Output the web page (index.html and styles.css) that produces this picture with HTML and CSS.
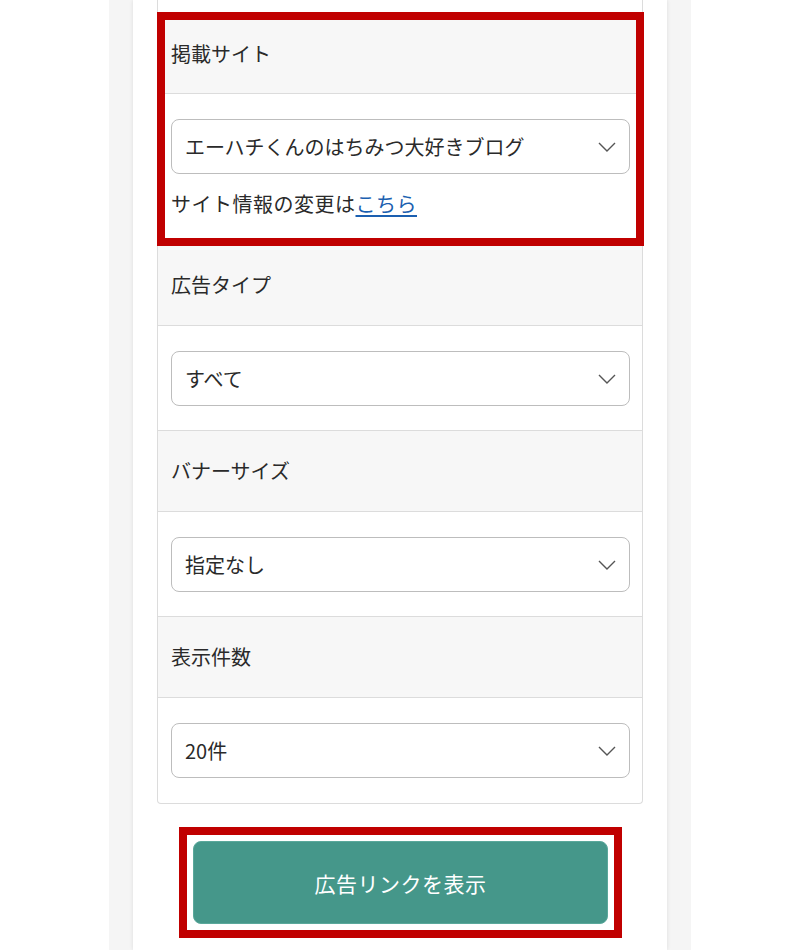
FILE: index.html
```html
<!DOCTYPE html>
<html lang="ja">
<head>
<meta charset="utf-8">
<title>広告リンク</title>
<link rel="stylesheet" href="styles.css">
</head>
<body>
<div class="page">
  <div class="panel">
    <div class="card">
      <div class="spacer"></div>
      <div class="group highlight">
        <div class="head first">掲載サイト</div>
        <div class="body">
          <div class="select-wrap">
            <select class="select"><option>エーハチくんのはちみつ大好きブログ</option></select>
            <svg class="chev" width="18" height="10" viewBox="0 0 18 10"><path d="M1 1 L9 9 L17 1" fill="none" stroke="#555" stroke-width="1.4"/></svg>
          </div>
          <p class="note">サイト情報の変更は<a href="#">こちら</a></p>
        </div>
      </div>
      <div class="head">広告タイプ</div>
      <div class="body">
        <div class="select-wrap">
          <select class="select"><option>すべて</option></select>
          <svg class="chev" width="18" height="10" viewBox="0 0 18 10"><path d="M1 1 L9 9 L17 1" fill="none" stroke="#555" stroke-width="1.4"/></svg>
        </div>
      </div>
      <div class="head">バナーサイズ</div>
      <div class="body">
        <div class="select-wrap">
          <select class="select"><option>指定なし</option></select>
          <svg class="chev" width="18" height="10" viewBox="0 0 18 10"><path d="M1 1 L9 9 L17 1" fill="none" stroke="#555" stroke-width="1.4"/></svg>
        </div>
      </div>
      <div class="head">表示件数</div>
      <div class="body last">
        <div class="select-wrap">
          <select class="select"><option>20件</option></select>
          <svg class="chev" width="18" height="10" viewBox="0 0 18 10"><path d="M1 1 L9 9 L17 1" fill="none" stroke="#555" stroke-width="1.4"/></svg>
        </div>
      </div>
    </div>
    <div class="btn-row">
      <div class="btn-mark">
        <button class="btn">広告リンクを表示</button>
      </div>
    </div>
  </div>
</div>
</body>
</html>
```
FILE: styles.css
```css
html, body {
  margin: 0;
  padding: 0;
  background: #ffffff;
}
body {
  font-family: "Noto Sans CJK JP", "Noto Sans", sans-serif;
  color: #2a2a2a;
  overflow: hidden;
}
.page {
  width: 582px;
  margin: 0 auto;
  background: #f5f5f5;
  min-height: 950px;
}
.panel {
  width: 534px;
  margin: 0 auto;
  min-height: 950px;
  background: #fff;
  box-shadow: 0 0 4px rgba(0,0,0,0.1);
  padding: 0 24px;
  box-sizing: border-box;
}
.card {
  border: 1px solid #dcdcdc;
  border-top: 0;
  border-radius: 0 0 4px 4px;
  background: #fff;
}
.spacer {
  height: 12px;
}
.group {
  position: relative;
}
.highlight::after {
  content: "";
  position: absolute;
  top: 0;
  left: -1px;
  right: -2px;
  bottom: -1px;
  border: 8px solid #c00000;
  pointer-events: none;
}
.head {
  height: 80px;
  display: flex;
  align-items: center;
  padding: 0 13px;
  background: #f7f7f7;
  border-bottom: 1px solid #dcdcdc;
  font-size: 20px;
  line-height: 1;
}
.head.first {
  height: 81px;
  padding-top: 2px;
  box-sizing: border-box;
  height: 82px;
}
.body {
  padding: 25px 12px 24px 13px;
  border-bottom: 1px solid #dcdcdc;
}
.group .body {
  padding-bottom: 25px;
}
.body.last {
  border-bottom: 0;
  padding-bottom: 25px;
}
.select-wrap {
  position: relative;
}
.select {
  appearance: none;
  -webkit-appearance: none;
  display: block;
  width: 100%;
  height: 55px;
  margin: 0;
  padding: 0 40px 0 13px;
  border: 1px solid #bdbdbd;
  border-radius: 8px;
  background: #fff;
  font-family: inherit;
  font-size: 20px;
  color: #2a2a2a;
  box-sizing: border-box;
}
.chev {
  position: absolute;
  right: 14px;
  top: 23px;
  pointer-events: none;
}
.note {
  margin: 15px 0 0;
  font-size: 20px;
  line-height: 30px;
  letter-spacing: 0.5px;
}
.note a {
  color: #1b5fb0;
  text-decoration: underline;
  text-underline-offset: 3px;
}
.btn-row {
  padding: 37px 35px 0 36px;
}
.btn-mark {
  position: relative;
}
.btn-mark::after {
  content: "";
  position: absolute;
  top: -14px;
  left: -14px;
  right: -14px;
  bottom: -14px;
  border: 8px solid #c00000;
  pointer-events: none;
}
.btn {
  display: block;
  width: 100%;
  height: 83px;
  margin: 0;
  border: 1px solid #5aa89b;
  border-radius: 8px;
  background: #45978a;
  color: #fff;
  font-family: inherit;
  font-size: 21px;
  letter-spacing: 0.5px;
}
```
